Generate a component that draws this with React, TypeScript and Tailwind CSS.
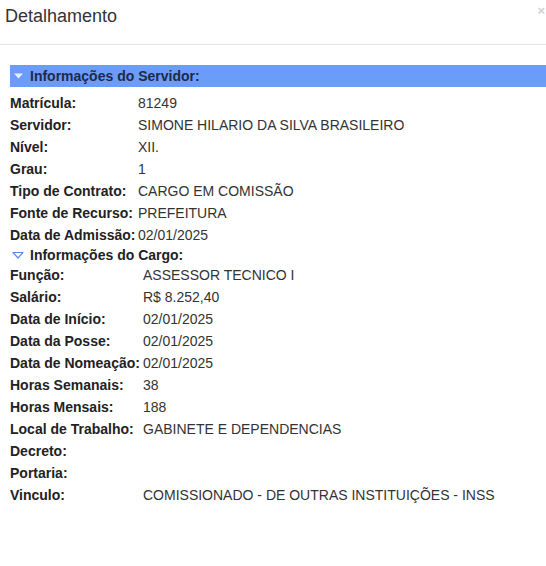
const servidor: [string, string][] = [
  ["Matrícula:", "81249"],
  ["Servidor:", "SIMONE HILARIO DA SILVA BRASILEIRO"],
  ["Nível:", "XII."],
  ["Grau:", "1"],
  ["Tipo de Contrato:", "CARGO EM COMISSÃO"],
  ["Fonte de Recurso:", "PREFEITURA"],
  ["Data de Admissão:", "02/01/2025"],
];

const cargo: [string, string][] = [
  ["Função:", "ASSESSOR TECNICO I"],
  ["Salário:", "R$ 8.252,40"],
  ["Data de Início:", "02/01/2025"],
  ["Data da Posse:", "02/01/2025"],
  ["Data de Nomeação:", "02/01/2025"],
  ["Horas Semanais:", "38"],
  ["Horas Mensais:", "188"],
  ["Local de Trabalho:", "GABINETE E DEPENDENCIAS"],
  ["Decreto:", ""],
  ["Portaria:", ""],
  ["Vinculo:", "COMISSIONADO - DE OUTRAS INSTITUIÇÕES - INSS"],
];

function Rows({ rows, labelWidth }: { rows: [string, string][]; labelWidth: string }) {
  return (
    <div className="flex flex-col">
      {rows.map(([label, value]) => (
        <div key={label} className="flex h-[22px] items-center">
          <span className={`${labelWidth} shrink-0 font-bold text-[#222]`}>{label}</span>
          <span className="text-[#333]">{value}</span>
        </div>
      ))}
    </div>
  );
}

export default function App() {
  return (
    <div className="h-[566px] w-[546px] overflow-hidden bg-white font-['Liberation_Sans',Arial,sans-serif] text-[14px]">
      <div className="relative flex h-[45px] items-start border-b border-[#e5e5e5] px-[5px] pt-[5px]">
        <h1 className="text-[18px] leading-[22px] text-[#333]">Detalhamento</h1>
        <span className="absolute right-[1px] top-[2px] text-[13px] font-bold leading-[18px] text-[#d0d0d0]">×</span>
      </div>

      <div className="pl-[10px] pt-[20px]">
        <div className="flex h-[22px] items-center gap-[6px] bg-[#6b9cfa] pl-[3px]">
          <svg width="11" height="8" viewBox="0 0 11 8">
            <path d="M1 1.5 L10 1.5 L5.5 6.5 Z" fill="#e8efff" />
          </svg>
          <span className="font-bold text-[#1e2a44]">Informações do Servidor:</span>
        </div>
        <div className="mt-[5px]">
          <Rows rows={servidor} labelWidth="w-[128px]" />
        </div>

        <div className="flex h-[18px] items-center gap-[6px] pl-[2px]">
          <svg width="12" height="9" viewBox="0 0 12 9">
            <path d="M1 1.5 L11 1.5 L6 7 Z" fill="none" stroke="#5b8de8" strokeWidth="1.2" strokeLinejoin="round" />
          </svg>
          <span className="font-bold text-[#222]">Informações do Cargo:</span>
        </div>
        <Rows rows={cargo} labelWidth="w-[133px]" />
      </div>
    </div>
  );
}
